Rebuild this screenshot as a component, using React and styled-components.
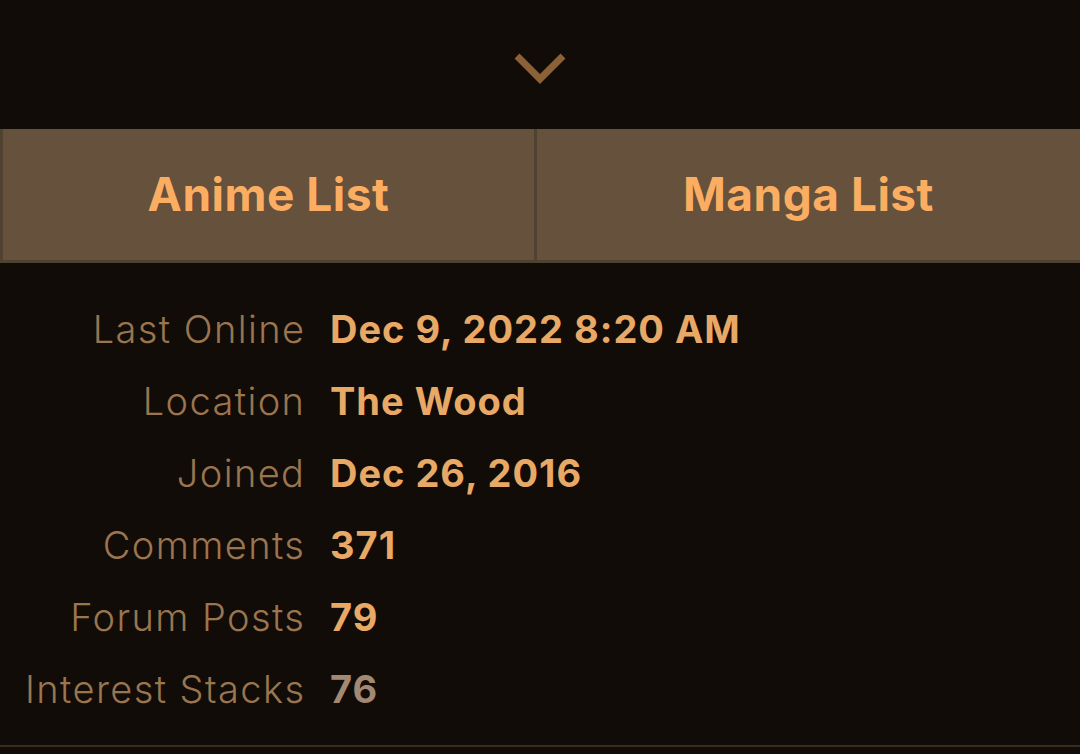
import styled, { createGlobalStyle } from "styled-components";

const GlobalStyle = createGlobalStyle`
  html, body {
    margin: 0;
    padding: 0;
    background: #110c07;
  }
  body {
    font-family: "Inter", "Noto Sans", sans-serif;
  }
`;

const stats = [
  { label: "Last Online", value: "Dec 9, 2022 8:20 AM" },
  { label: "Location", value: "The Wood" },
  { label: "Joined", value: "Dec 26, 2016" },
  { label: "Comments", value: "371" },
  { label: "Forum Posts", value: "79" },
  { label: "Interest Stacks", value: "76", muted: true },
];

const Page = styled.div`
  width: 1080px;
  height: 754px;
  background: #110c07;
  display: flex;
  flex-direction: column;
  overflow: hidden;
`;

const Toggle = styled.div`
  height: 129px;
  display: flex;
  align-items: flex-start;
  justify-content: center;
  padding-top: 52px;
  box-sizing: border-box;
`;

const Tabs = styled.div`
  display: grid;
  grid-template-columns: 531px 1fr;
  height: 134px;
  background: #66513d;
  border-left: 3px solid #4f4230;
  border-bottom: 3px solid #4f4230;
  box-sizing: border-box;
`;

const Tab = styled.div`
  display: flex;
  align-items: center;
  justify-content: center;
  color: #fbae62;
  font-size: 46px;
  font-weight: 700;
  letter-spacing: 0.5px;
  padding-bottom: 2px;
  border-left: ${({ $divider }) => ($divider ? "3px solid #4f4230" : "none")};
`;

const Stats = styled.div`
  display: grid;
  grid-template-columns: 304px 1fr;
  column-gap: 26px;
  padding-top: 30px;
`;

const Label = styled.div`
  text-align: right;
  color: #9a7550;
  font-size: 38px;
  font-weight: 300;
  letter-spacing: 1.4px;
  margin-right: -1.4px;
  line-height: 72px;
  height: 72px;
`;

const Value = styled.div`
  color: ${({ $muted }) => ($muted ? "#a38872" : "#e8a866")};
  font-size: 38px;
  font-weight: 700;
  letter-spacing: 1px;
  line-height: 72px;
  height: 72px;
`;

const Rule = styled.div`
  margin-top: auto;
  margin-bottom: 7px;
  height: 2px;
  background: #3a2b1d;
`;

export default function App() {
  return (
    <Page>
      <GlobalStyle />
      <Toggle>
        <svg width="52" height="34" viewBox="0 0 52 34">
          <path
            d="M3 4 L26 27 L49 4"
            fill="none"
            stroke="#8c6137"
            strokeWidth="7"
            strokeLinecap="butt"
            strokeLinejoin="miter"
          />
        </svg>
      </Toggle>
      <Tabs>
        <Tab>Anime List</Tab>
        <Tab $divider>Manga List</Tab>
      </Tabs>
      <Stats>
        {stats.map((s) => (
          <>
            <Label key={s.label + "l"}>{s.label}</Label>
            <Value key={s.label + "v"} $muted={s.muted}>
              {s.value}
            </Value>
          </>
        ))}
      </Stats>
      <Rule />
    </Page>
  );
}
